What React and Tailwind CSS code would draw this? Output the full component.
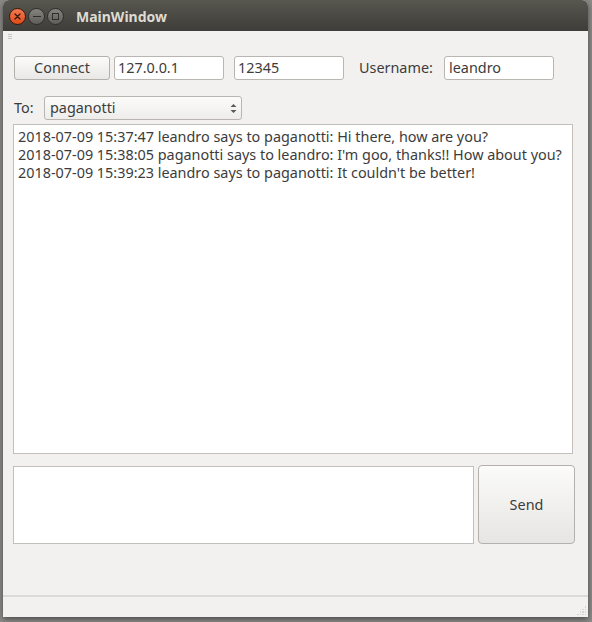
import React from "react";

const font = { fontFamily: '"Noto Sans", "DejaVu Sans", sans-serif' };

export default function App() {
  return (
    <div className="w-[592px] h-[622px] bg-[#8d8c89] relative overflow-hidden" style={font}>
      <div className="absolute left-[3px] top-0 w-[585px] h-[617px] flex flex-col bg-[#f2f1f0] rounded-t-[6px] overflow-hidden shadow-[0_2px_6px_rgba(0,0,0,0.5)]">
        {/* Title bar */}
        <div className="h-[31px] flex items-center bg-gradient-to-b from-[#57564f] to-[#3e3d39] shrink-0">
          <div className="flex items-center gap-[2px] ml-[6px] mt-[2px]">
            <div className="w-[17px] h-[17px] rounded-full bg-gradient-to-b from-[#f37a4e] to-[#df4a16] border border-[#3a1a10] flex items-center justify-center">
              <svg width="7" height="7" viewBox="0 0 7 7"><path d="M1 1L6 6M6 1L1 6" stroke="#3a1a10" strokeWidth="1.4" strokeLinecap="round" /></svg>
            </div>
            <div className="w-[17px] h-[17px] rounded-full bg-gradient-to-b from-[#85847e] to-[#5f5e59] border border-[#2f2e2b] flex items-center justify-center">
              <div className="w-[8px] h-[1.5px] bg-[#2f2e2b]" />
            </div>
            <div className="w-[17px] h-[17px] rounded-full bg-gradient-to-b from-[#85847e] to-[#5f5e59] border border-[#2f2e2b] flex items-center justify-center">
              <div className="w-[7px] h-[7px] border-[1.5px] border-[#2f2e2b]" />
            </div>
          </div>
          <div className="ml-[12px] mt-[3px] text-[14px] font-bold text-[#dfdbd2] leading-none">MainWindow</div>
        </div>
        {/* grip */}
        <div className="h-[25px] pl-[5px] pt-[3px]">
          <div className="flex flex-col gap-[1px]">
            <div className="w-[4px] h-[1px] bg-[#c8c6c2]" />
            <div className="w-[4px] h-[1px] bg-[#c8c6c2]" />
            <div className="w-[4px] h-[1px] bg-[#c8c6c2]" />
          </div>
        </div>
        {/* Row 1 */}
        <div className="flex items-center pl-[11px] text-[14.4px] leading-[20px] text-[#3c3c3c]">
          <button className="w-[96px] h-[24px] rounded-[3px] border border-[#b4b1ac] bg-gradient-to-b from-[#fbfbfa] to-[#e9e8e6] text-[#3c3c3c] leading-none">Connect</button>
          <div className="ml-[4px] w-[110px] h-[24px] rounded-[3px] border border-[#b9b6b1] bg-white pl-[3px] flex items-center">127.0.0.1</div>
          <div className="ml-[10px] w-[110px] h-[24px] rounded-[3px] border border-[#b9b6b1] bg-white pl-[3px] flex items-center">12345</div>
          <div className="ml-[15px] w-[73px]">Username:</div>
          <div className="ml-[12px] w-[110px] h-[24px] rounded-[3px] border border-[#b9b6b1] bg-white pl-[4px] flex items-center">leandro</div>
        </div>
        {/* Row 2 */}
        <div className="flex items-center pl-[11px] mt-[16px] text-[14.4px] leading-[20px] text-[#3c3c3c]">
          <div className="w-[30px]">To:</div>
          <div className="w-[198px] h-[24px] rounded-[3px] border border-[#b9b6b1] bg-gradient-to-b from-[#fbfbfa] to-[#eeedeb] pl-[5px] pr-[4px] flex items-center justify-between">
            <span>paganotti</span>
            <svg width="7" height="11" viewBox="0 0 7 11"><path d="M0.5 4L3.5 1L6.5 4Z M0.5 7L3.5 10L6.5 7Z" fill="#5a5a5a" /></svg>
          </div>
        </div>
        {/* Chat */}
        <div className="ml-[10px] mt-[4px] w-[560px] h-[330px] border border-[#c3bfba] bg-white px-[4px] pt-[3px] text-[14.4px] leading-[18px] text-[#3c3c3c]">
          <div>2018-07-09 15:37:47 leandro says to paganotti: Hi there, how are you?</div>
          <div>2018-07-09 15:38:05 paganotti says to leandro: I'm goo, thanks!! How about you?</div>
          <div>2018-07-09 15:39:23 leandro says to paganotti: It couldn't be better!</div>
        </div>
        {/* Bottom row */}
        <div className="flex items-start ml-[10px] mt-[11px]">
          <div className="mt-[1px] w-[461px] h-[78px] border border-[#c3bfba] bg-white" />
          <button className="ml-[4px] w-[97px] h-[79px] rounded-[4px] border border-[#b4b1ac] bg-gradient-to-b from-[#fbfbfa] to-[#e6e5e3] text-[14.4px] text-[#3c3c3c]">Send</button>
        </div>
        <div className="flex-1" />
        {/* status bar */}
        <div className="h-[22px] border-t-2 border-[#dcdad6] relative">
          <div className="absolute right-[2px] bottom-[2px] grid grid-cols-4 gap-[1px]">
            {[0,0,0,1, 0,0,1,1, 0,1,1,1, 1,1,1,1].map((v, i) => (
              <div key={i} className={v ? "w-[1.5px] h-[1.5px] bg-[#d8d6d2]" : "w-[1.5px] h-[1.5px]"} />
            ))}
          </div>
        </div>
      </div>
    </div>
  );
}
